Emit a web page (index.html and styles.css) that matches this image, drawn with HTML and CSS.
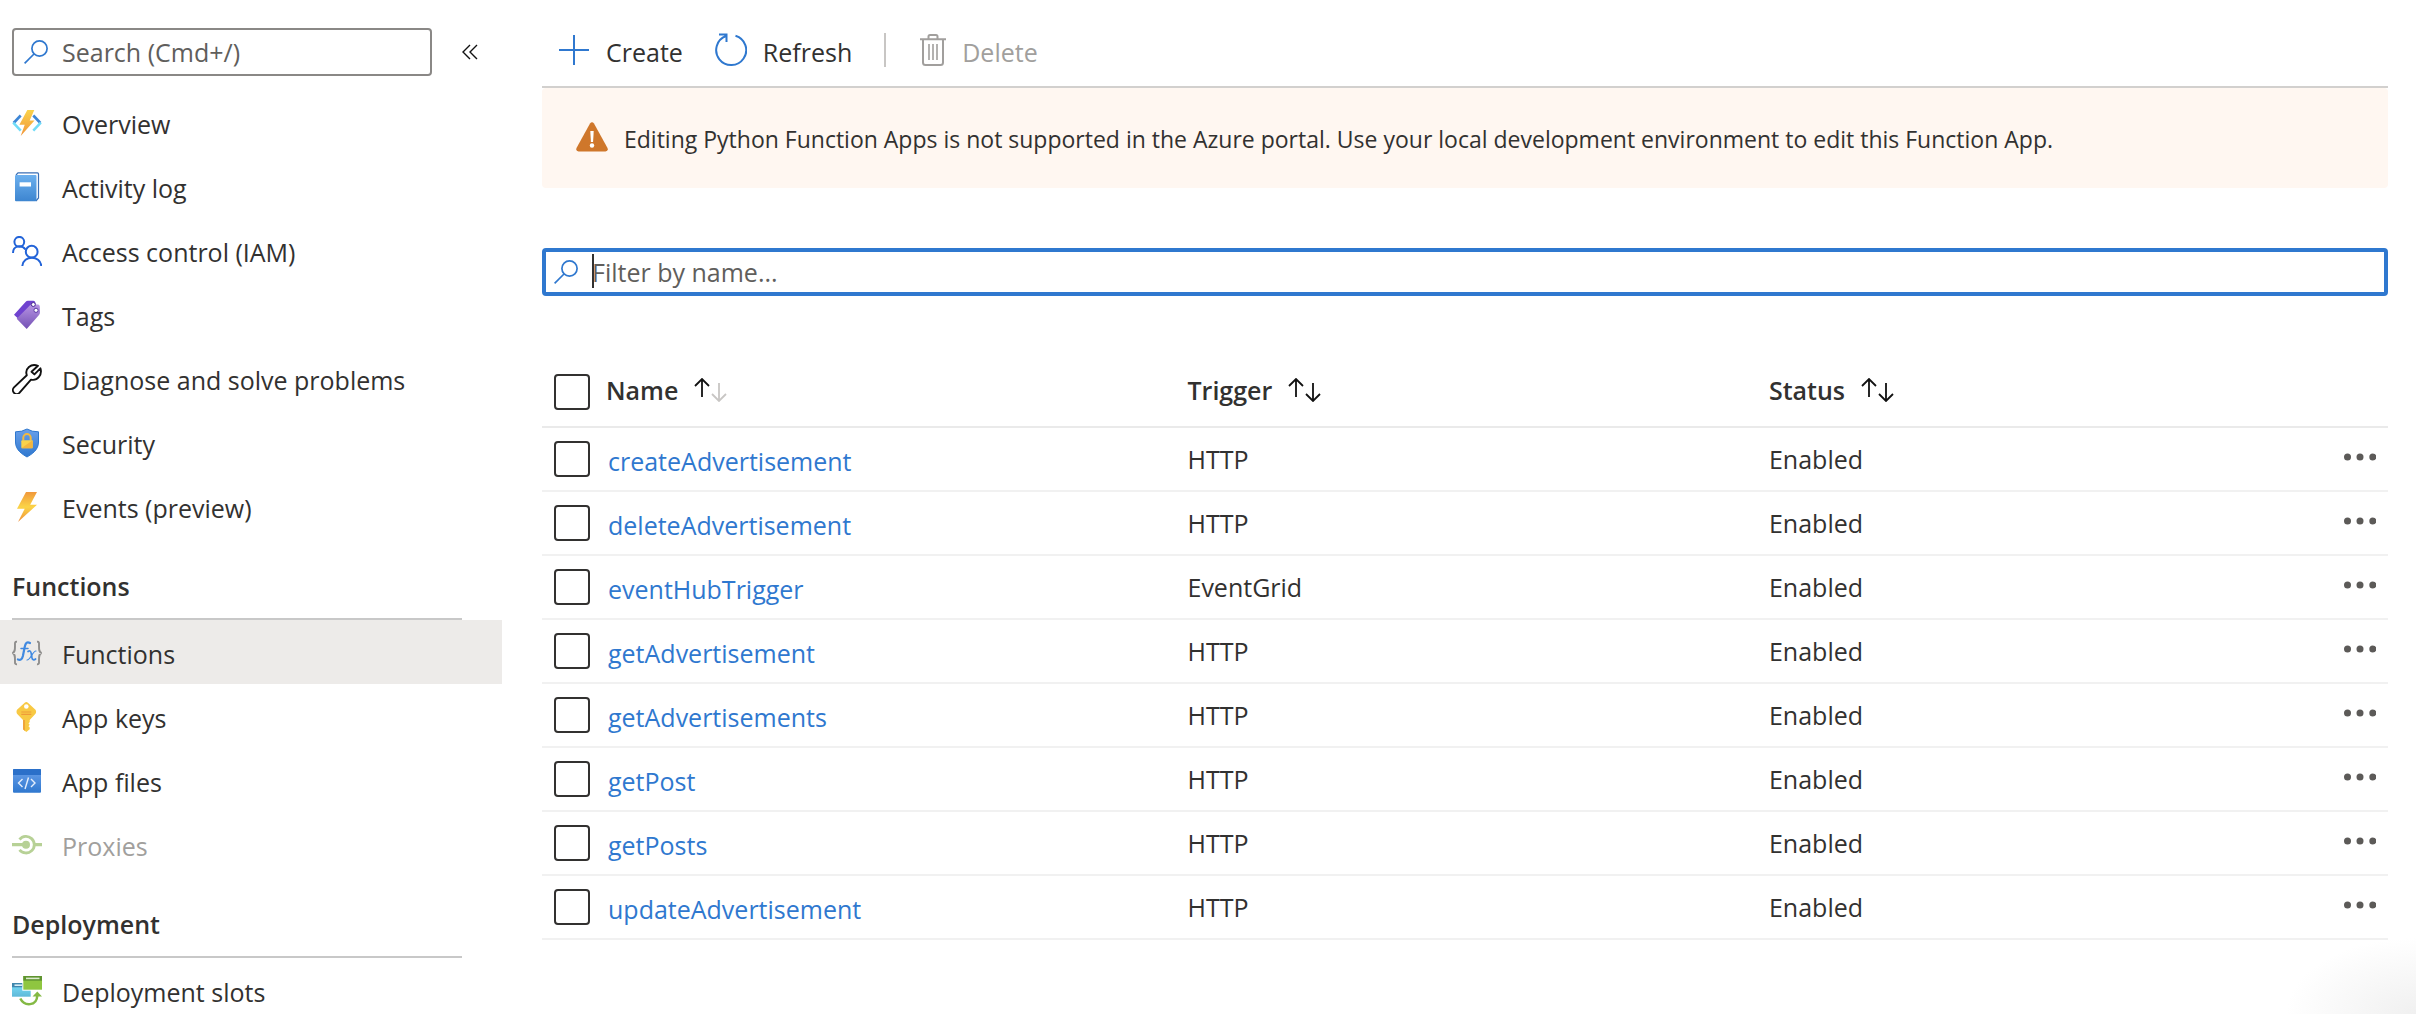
FILE: index.html
```html
<!DOCTYPE html>
<html lang="en">
<head>
<meta charset="utf-8">
<meta name="viewport" content="width=device-width, initial-scale=1">
<title>Functions</title>
<link rel="stylesheet" href="styles.css">
</head>
<body>
<svg class="defs" aria-hidden="true">
  <defs>
    <linearGradient id="gold" x1="0" y1="0" x2="0" y2="1"><stop offset="0" stop-color="#fbd34b"/><stop offset="1" stop-color="#f0953a"/></linearGradient>
    <linearGradient id="flash" x1="0" y1="0" x2="0" y2="1"><stop offset="0" stop-color="#f0983c"/><stop offset=".5" stop-color="#fbd446"/><stop offset="1" stop-color="#ef8f3b"/></linearGradient>
    <linearGradient id="blue" x1="0" y1="0" x2="0" y2="1"><stop offset="0" stop-color="#6cb0ee"/><stop offset="1" stop-color="#3d85d0"/></linearGradient>
    <linearGradient id="shield" x1="0" y1="0" x2="0" y2="1"><stop offset="0" stop-color="#6aa0ea"/><stop offset="1" stop-color="#2f78cf"/></linearGradient>
    <linearGradient id="violet" x1="0" y1="0" x2="0" y2="1"><stop offset="0" stop-color="#b794e4"/><stop offset="1" stop-color="#7350b4"/></linearGradient>
    <linearGradient id="cyan" x1="0" y1="0" x2="0" y2="1"><stop offset="0" stop-color="#7be0fa"/><stop offset="1" stop-color="#5fb9d8"/></linearGradient>
    <symbol id="lens" viewBox="0 0 24 24"><g fill="none" stroke="#2f78cf" stroke-width="1.7"><circle cx="15.5" cy="8.5" r="7.6"/><path d="M10 14 .6 23.4"/></g></symbol>
    <symbol id="dots" viewBox="0 0 32 8"><g fill="#5c5a58"><circle cx="3.5" cy="4" r="3.5"/><circle cx="16" cy="4" r="3.5"/><circle cx="28.8" cy="4" r="3.5"/></g></symbol>
    <symbol id="up" viewBox="0 0 16 24"><path d="M8 19V1.500M1 8l7-7 7 7" fill="none" stroke="currentColor" stroke-width="1.800"/></symbol>
    <symbol id="down" viewBox="0 0 16 24"><path d="M8 5v17.500M1 16l7 7 7-7" fill="none" stroke="currentColor" stroke-width="1.800"/></symbol>
  </defs>
</svg>
<div class="shell">
  <aside class="sidebar">
    <div class="search-row">
      <div class="field search">
        <svg class="lens" aria-hidden="true"><use href="#lens"/></svg>
        <input type="text" aria-label="Search menu" placeholder="Search (Cmd+/)">
      </div>
      <button class="collapse" type="button" aria-label="Collapse menu">
        <svg width="16" height="16" viewBox="0 0 16 16"><path d="M8 1 1 8l7 7M15 1 8 8l7 7" fill="none" stroke="#111" stroke-width="1.4"/></svg>
      </button>
    </div>
    <nav>
      <ul class="menu">
        <li><a class="item" href="#overview"><svg class="icon" viewBox="0 0 30 30"><path d="M8.7 7.5 1.6 15" stroke="#3d86d6" stroke-width="2.6"/><path d="m1.2 14.6 7.5 8" stroke="#70dcf8" stroke-width="2.6"/><path d="m21.3 7.5 7.1 7.5" stroke="#3d86d6" stroke-width="2.6"/><path d="m28.8 14.6-7.5 8" stroke="#70dcf8" stroke-width="2.6"/><path d="M15.3 2h7l-4.6 10.6h4.8L8.7 28l4-11.3H7.4z" fill="url(#gold)"/></svg><span>Overview</span></a></li>
        <li><a class="item" href="#activity"><svg class="icon" viewBox="0 0 30 30"><path d="M4 3 6 .9h19.5a1 1 0 0 1 1 1V26l-2.6 3" fill="#fff" stroke="#3b6fb5" stroke-width="1.2"/><rect x="3" y="3" width="21.5" height="26.3" rx="1" fill="url(#blue)"/><rect x="7.6" y="10.3" width="11.4" height="4.2" fill="#fff"/></svg><span>Activity log</span></a></li>
        <li><a class="item" href="#iam"><svg class="icon" viewBox="0 0 30 30" fill="none" stroke="#2263d8" stroke-width="2"><circle cx="7.3" cy="5.8" r="4.9"/><path d="M1 17c0-8 9-8.500 12.500-3.500"/><circle cx="19.700" cy="15.700" r="5.900"/><path d="M10.300 30c1-11 18-11 19 0"/></svg><span>Access control (IAM)</span></a></li>
        <li><a class="item" href="#tags"><svg class="icon" viewBox="0 0 30 30"><path d="M2 14.700 13.500 2q1-1.200 2.500-1.200h5.500q1.500 0 1.800 1.500l1 5L6 18.500z" fill="#6f42cf"/><path d="M4.700 18.700 18 5.200q1-1 2.500-.9l5.500.3q1.600.2 1.800 1.900l.2 5.800q0 1.600-1 2.700L14.700 29z" fill="url(#violet)"/><circle cx="21.300" cy="4.500" r="2" fill="#fff" stroke="#4c2c92"/><circle cx="24" cy="10.300" r="2.100" fill="#fff" stroke="#5b3aa4"/></svg><span>Tags</span></a></li>
        <li><a class="item" href="#diagnose"><svg class="icon" viewBox="0 0 30 30"><path d="M26 1.800C19-1 12.500 4.500 14.800 11.300L2 23.400a3.800 3.800 0 0 0 5.400 5.400L19 15.600c6.500 1.600 11.500-5 9.400-11.300l-6 6.100-2.900-2.600z" fill="none" stroke="#111" stroke-width="1.900" stroke-linejoin="round"/></svg><span>Diagnose and solve problems</span></a></li>
        <li><a class="item" href="#security"><svg class="icon" viewBox="0 0 30 30"><path d="M15 1q5 3 11.500 2.800V14c0 8-6.500 12-11.500 15C10 26 3.500 22 3.500 14V3.800Q10 4 15 1z" fill="url(#shield)" stroke="#2f78cf"/><path d="M11.300 12.500V9.700a3.700 3.700 0 0 1 7.400 0v2.800" fill="none" stroke="#f3b93f" stroke-width="2"/><rect x="9.300" y="12.300" width="11.400" height="7.900" rx="1" fill="#fad24b"/><path d="M20.700 12.300v7.900H9.300z" fill="#f3b53f"/></svg><span>Security</span></a></li>
        <li><a class="item" href="#events"><svg class="icon" viewBox="0 0 30 30"><path d="M14 0h11l-6.800 12.800H25L6 30l6.700-13.200H5z" fill="url(#flash)"/></svg><span>Events (preview)</span></a></li>
      </ul>
      <h2 class="group">Functions</h2>
      <ul class="menu">
        <li><a class="item selected" href="#functions" aria-current="page"><svg class="icon" viewBox="0 0 30 30"><path d="M5 3.800C2.500 3.500 3 5 3 8c0 4 0 6.500-2.700 7C3 15.500 3 18 3 22c0 3-.5 4.500 2 4.200M25 3.800c2.500-.3 2 1.200 2 4.200 0 4 0 6.500 2.700 7-2.700.5-2.700 3-2.700 7 0 3 .5 4.500-2 4.200" fill="none" stroke="#8f8e8d" stroke-width="1.900"/><g fill="none" stroke="#4089e0" stroke-linecap="round"><path d="M18 5c-3-1.600-4.500 0-5.300 4l-1.800 9c-.8 3.500-2.500 4.500-5 3.500" stroke-width="2.200"/><path d="M9 10.500h7" stroke-width="1.500"/><path d="M16 13.500c2-1.500 3 0 3.300 2.500l.6 3.500c.5 2.500 2 3 3.700 1.500" stroke-width="1.700"/><path d="M24 13c-3-.5-5.500 9-9 9" stroke-width="1.200"/></g></svg><span>Functions</span></a></li>
        <li><a class="item" href="#keys"><svg class="icon" viewBox="0 0 30 30"><path d="M12.700.7q1.600-1.200 3.200 0l7.600 7q1.200 2 0 4L17.700 18v2l-1.200 1.500 1.200 1.300-1.200 1.500 1.200 1.300v1.700L14.300 30 11 27.300V18L5 11.700q-1-2 0-4z" fill="#f8c944"/><path d="M11 18h2v10.900l-2-1.600z" fill="#efa53a"/><circle cx="14.300" cy="4.500" r="2.300" fill="#fff"/><path d="M9.300 10h10M9.300 12.300h10" stroke="#ee9b39" stroke-width="1.200"/></svg><span>App keys</span></a></li>
        <li><a class="item" href="#files"><svg class="icon" viewBox="0 0 30 30"><rect x="1" y="3" width="28" height="23.700" rx="1" fill="url(#shield)"/><path d="M1 9V4q0-1 1-1h26q1 0 1 1v5z" fill="#2b70c9"/><path d="m10.500 13-4 4 4 4M19 13l4 4-4 4M16.500 11.500 13 23" fill="none" stroke="#e4eefc" stroke-width="1.400"/></svg><span>App files</span></a></li>
        <li><a class="item disabled" aria-disabled="true"><svg class="icon" viewBox="0 0 30 30"><path d="M0 14.700h14M23 14.700h7" stroke="#b7d196" stroke-width="3.200"/><circle cx="14" cy="14.700" r="4" fill="#b7d196"/><path d="M7.500 9.500a8.300 8.300 0 1 1 0 10.400" fill="none" stroke="#b7d196" stroke-width="2.800"/></svg><span>Proxies</span></a></li>
      </ul>
      <h2 class="group">Deployment</h2>
      <ul class="menu">
        <li><a class="item" href="#slots"><svg class="icon" viewBox="0 0 30 30"><path d="M0 7h18.700v13.700H0z" fill="url(#cyan)"/><path d="M0 7h11v4.300H0z" fill="#3f87ad"/><path d="M2.500 9.200H10" stroke="#d9eef6" stroke-width="1.600"/><path d="M10.300 0H30v14.700H10.300z" fill="#fff"/><path d="M11.300 0H30v13.700H11.300z" fill="#8fc640"/><path d="M11.300 0H30v4.700H11.300z" fill="#5f9430"/><path d="M14 2.400h13.500" stroke="#dcebcd" stroke-width="1.600"/><path d="M8.300 22.500c4 8 16.500 8 17-3" fill="none" stroke="#84b944" stroke-width="2.500"/><path d="m20.500 20.500 4.800-5 4.700 5z" fill="#84b944"/></svg><span>Deployment slots</span></a></li>
      </ul>
    </nav>
  </aside>

  <main class="content">
    <div class="toolbar">
      <button type="button"><svg width="32" height="32" viewBox="0 0 32 32"><path d="M16 1v30M1 16h30" stroke="#2f78cf" stroke-width="2"/></svg><span>Create</span></button>
      <button type="button"><svg width="32" height="34" viewBox="0 0 32 34"><path d="M20.500 2.700a15 15 0 1 1-9.500.3M4 1.500h7.500V9" fill="none" stroke="#2f78cf" stroke-width="2"/></svg><span>Refresh</span></button>
      <span class="divider"></span>
      <button type="button" disabled><svg width="26" height="34" viewBox="0 0 26 34"><g fill="none" stroke="#a19f9d" stroke-width="2"><path d="M0 6.200h26M8.500 6V3.500q0-1.500 1.500-1.500h6q1.500 0 1.500 1.500V6M3 6v23.500Q3 32 5.500 32h15q2.500 0 2.500-2.500V6"/><path d="M9 11v16M13 11v16M17 11v16" stroke-width="1.600"/></g></svg><span>Delete</span></button>
    </div>

    <div class="banner" role="status">
      <svg width="32" height="30" viewBox="0 0 32 30"><path d="M14 1.500q2-2.500 4 0L31.500 26q1 3-2 3.500h-27q-3-.5-2-3.500z" fill="#cf772b"/><path d="M14.300 9h3.400l-.6 11h-2.200z" fill="#fff"/><circle cx="16" cy="23.500" r="2.200" fill="#fff"/></svg>
      <p>Editing Python Function Apps is not supported in the Azure portal. Use your local development environment to edit this Function App.</p>
    </div>

    <div class="field filter">
      <svg class="lens" aria-hidden="true"><use href="#lens"/></svg>
      <input type="text" aria-label="Filter by name" placeholder="Filter by name...">
    </div>

    <table class="grid">
      <colgroup><col class="col-check"><col class="col-name"><col class="col-trigger"><col><col class="col-more"></colgroup>
      <thead>
        <tr>
          <th><input type="checkbox" aria-label="Select all"></th>
          <th><button class="sort" type="button">Name<span class="arrows"><svg><use href="#up"/></svg><svg class="dim"><use href="#down"/></svg></span></button></th>
          <th><button class="sort" type="button">Trigger<span class="arrows"><svg><use href="#up"/></svg><svg><use href="#down"/></svg></span></button></th>
          <th><button class="sort" type="button">Status<span class="arrows"><svg><use href="#up"/></svg><svg><use href="#down"/></svg></span></button></th>
          <th></th>
        </tr>
      </thead>
      <tbody>
        <tr><td><input type="checkbox" aria-label="Select createAdvertisement"></td><td><a href="#f1">createAdvertisement</a></td><td>HTTP</td><td>Enabled</td><td><button class="more" type="button" aria-label="More actions"><svg><use href="#dots"/></svg></button></td></tr>
        <tr><td><input type="checkbox" aria-label="Select deleteAdvertisement"></td><td><a href="#f2">deleteAdvertisement</a></td><td>HTTP</td><td>Enabled</td><td><button class="more" type="button" aria-label="More actions"><svg><use href="#dots"/></svg></button></td></tr>
        <tr><td><input type="checkbox" aria-label="Select eventHubTrigger"></td><td><a href="#f3">eventHubTrigger</a></td><td>EventGrid</td><td>Enabled</td><td><button class="more" type="button" aria-label="More actions"><svg><use href="#dots"/></svg></button></td></tr>
        <tr><td><input type="checkbox" aria-label="Select getAdvertisement"></td><td><a href="#f4">getAdvertisement</a></td><td>HTTP</td><td>Enabled</td><td><button class="more" type="button" aria-label="More actions"><svg><use href="#dots"/></svg></button></td></tr>
        <tr><td><input type="checkbox" aria-label="Select getAdvertisements"></td><td><a href="#f5">getAdvertisements</a></td><td>HTTP</td><td>Enabled</td><td><button class="more" type="button" aria-label="More actions"><svg><use href="#dots"/></svg></button></td></tr>
        <tr><td><input type="checkbox" aria-label="Select getPost"></td><td><a href="#f6">getPost</a></td><td>HTTP</td><td>Enabled</td><td><button class="more" type="button" aria-label="More actions"><svg><use href="#dots"/></svg></button></td></tr>
        <tr><td><input type="checkbox" aria-label="Select getPosts"></td><td><a href="#f7">getPosts</a></td><td>HTTP</td><td>Enabled</td><td><button class="more" type="button" aria-label="More actions"><svg><use href="#dots"/></svg></button></td></tr>
        <tr><td><input type="checkbox" aria-label="Select updateAdvertisement"></td><td><a href="#f8">updateAdvertisement</a></td><td>HTTP</td><td>Enabled</td><td><button class="more" type="button" aria-label="More actions"><svg><use href="#dots"/></svg></button></td></tr>
      </tbody>
    </table>
  </main>
</div>
</body>
</html>
```
FILE: styles.css
```css
* { box-sizing: border-box; }

body {
  margin: 0;
  background: #fff;
  color: #323130;
  font: 25px/32px "Open Sans", "Noto Sans", sans-serif;
}

button, input { font: inherit; color: inherit; }

button {
  border: 0;
  padding: 0;
  background: none;
}

svg { display: block; flex: none; }

.defs { position: absolute; width: 0; height: 0; }

.shell {
  display: flex;
  height: 100vh;
  overflow: hidden;
}

/* Sidebar */
.sidebar {
  flex: none;
  width: 502px;
  padding-top: 28px;
}

.search-row {
  display: flex;
  align-items: center;
  gap: 30px;
  margin: 0 24px 14px 12px;
}

.field {
  display: flex;
  align-items: center;
  height: 48px;
  gap: 14px;
  border-radius: 4px;
}

.field input {
  flex: 1;
  min-width: 0;
  height: 40px;
  border: 0;
  padding: 0;
  outline: 0;
  background: none;
}

.field input::placeholder { color: #605e5c; opacity: 1; }

.lens { width: 24px; height: 24px; }

.search {
  width: 420px;
  padding-left: 10px;
  border: 2px solid #8a8886;
}

.menu { margin: 0; padding: 0; list-style: none; }

.item {
  display: flex;
  align-items: center;
  gap: 20px;
  height: 64px;
  padding: 2px 12px 0;
  color: inherit;
  text-decoration: none;
}

.item span { padding-top: 2px; }

.icon { width: 30px; height: 30px; }

.selected { background: #edebe9; }

.disabled { color: #a19f9d; }

.group {
  height: 82px;
  margin: 0 40px 0 12px;
  padding-top: 32px;
  border-bottom: 2px solid #c8c8c8;
  font-size: 25px;
  font-weight: 600;
}

/* Content */
.content {
  flex: 1;
  padding: 0 28px 0 40px;
  background: radial-gradient(130px 76px at 100% 100%, #f0f0f0, #fff) no-repeat;
}

.toolbar {
  display: flex;
  align-items: center;
  height: 88px;
  padding: 14px 16px 0;
  border-bottom: 2px solid #d2d0ce;
}

.toolbar button {
  display: flex;
  align-items: center;
  gap: 16px;
  margin-right: 32px;
}

.toolbar span { padding-top: 4px; }

.toolbar button:disabled { color: #a19f9d; }

.divider {
  width: 2px;
  height: 34px;
  margin-right: 34px;
  background: #c8c6c4;
}

.banner {
  display: flex;
  align-items: center;
  gap: 16px;
  height: 100px;
  padding: 0 34px 2px;
  border-radius: 4px;
  background: #fff7f1;
  font-size: 23px;
}

.banner p { margin: 0; padding-top: 4px; }

.filter {
  position: relative;
  margin: 60px 0 62px;
  padding-left: 8px;
  border: 4px solid #2f78cf;
}

/* Insertion caret of the focused filter */
.filter::after {
  content: "";
  position: absolute;
  left: 46px;
  top: 2px;
  width: 2px;
  height: 34px;
  background: #323130;
}

.grid {
  width: 100%;
  border-collapse: separate;
  border-spacing: 0;
  table-layout: fixed;
}

.col-check { width: 64px; }
.col-name, .col-trigger { width: 31.5%; }
.col-more { width: 44px; }

th, td {
  height: 64px;
  padding: 0;
  border-bottom: 2px solid #f1f1f1;
  text-align: left;
  vertical-align: middle;
}

th {
  height: 70px;
  border-bottom-color: #eaeaea;
}

.grid input {
  display: block;
  appearance: none;
  width: 36px;
  height: 36px;
  margin: 0 0 0 12px;
  border: 2px solid #323130;
  border-radius: 4px;
  background: #fff;
}

.grid a {
  display: inline-block;
  padding: 4px 0 0 2px;
  color: #2f78cf;
  text-decoration: none;
}

.sort {
  display: flex;
  align-items: center;
  gap: 16px;
  padding-bottom: 4px;
  font-weight: 600;
}

.arrows { display: flex; gap: 1px; color: #111; }
.arrows svg { width: 16px; height: 24px; }
.arrows .dim { color: #c8c6c4; }

.more { display: block; padding-bottom: 4px; }
.more svg { width: 32px; height: 8px; }
```
